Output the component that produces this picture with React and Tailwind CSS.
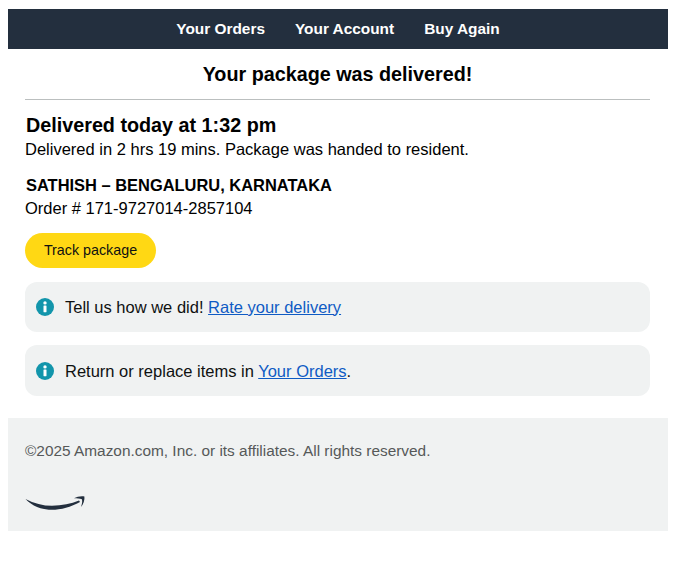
import React from 'react';

function InfoIcon() {
  return (
    <svg viewBox="0 0 18 18" className="h-[18px] w-[18px] shrink-0">
      <circle cx="9" cy="9" r="9" fill="#1295ab" />
      <circle cx="9" cy="4.9" r="1.7" fill="#fff" />
      <rect x="7.5" y="7.6" width="3" height="6.6" rx="0.4" fill="#fff" />
    </svg>
  );
}

function Notice({ children, className }) {
  return (
    <div className={`flex items-center gap-[11px] rounded-xl bg-[#f0f2f2] pl-[11px] text-[16.5px] text-[#0f1111] ${className}`}>
      <InfoIcon />
      <p>{children}</p>
    </div>
  );
}

export default function App() {
  return (
    <div className="bg-white pl-2 pr-5 pt-[9px] pb-[37px] font-['Liberation_Sans',Arial,sans-serif] text-black">
      <nav className="flex h-10 items-center justify-center gap-[30px] bg-[#232f3e] text-[15.4px] font-bold text-white">
        <a>Your Orders</a>
        <a>Your Account</a>
        <a>Buy Again</a>
      </nav>

      <main className="pl-[17px] pr-[18px]">
        <h1 className="mt-[13px] text-center text-[19.75px] leading-[24px] font-bold">Your package was delivered!</h1>
        <hr className="mt-[13px] border-t border-[#bbbfbf]" />

        <h2 className="mt-[13px] pl-px text-[19.75px] leading-[24px] font-bold">Delivered today at 1:32 pm</h2>
        <p className="mt-[3px] text-[16.5px] leading-[19px]">Delivered in 2 hrs 19 mins. Package was handed to resident.</p>

        <p className="mt-[17px] pl-px text-[16.45px] leading-[19px] font-bold">SATHISH – BENGALURU, KARNATAKA</p>
        <p className="mt-[4px] text-[16.5px] leading-[19px]">Order # 171-9727014-2857104</p>

        <button className="mt-[15px] flex h-[35px] w-[131px] items-center justify-center rounded-full bg-[#ffd814] text-[14.3px] text-[#0f1111]">
          Track package
        </button>

        <Notice className="mt-[14px] h-[50px]">
          Tell us how we did! <a className="text-[#0f5bc4] underline">Rate your delivery</a>
        </Notice>
        <Notice className="mt-[13px] h-[51px] pt-px">
          Return or replace items in <a className="text-[#0f5bc4] underline">Your Orders</a>.
        </Notice>
      </main>

      <footer className="mt-[22px] h-[113px] bg-[#f0f2f2] pl-[17px] pt-[24px]">
        <p className="text-[15.4px] leading-[18px] text-[#565959]">©2025 Amazon.com, Inc. or its affiliates. All rights reserved.</p>
        <svg viewBox="0 0 60 16" className="mt-[35px] h-4 w-[60px]">
          <path d="M0.5 4C9 8.6 18 10.8 27 10.8C37 10.8 46 8.8 54 5.6L55 7C46 12 36 14.8 27 14.8C16 14.8 7 10.8 0.5 4Z" fill="#232f3e" />
          <path d="M49 3.2C52 1.6 56 0.8 59.4 1.4C59.9 4.6 58.4 9 56 12C57 9 57.6 6.2 56.9 4.2C54.8 3.4 52 3.2 49 3.2Z" fill="#232f3e" />
        </svg>
      </footer>
    </div>
  );
}
